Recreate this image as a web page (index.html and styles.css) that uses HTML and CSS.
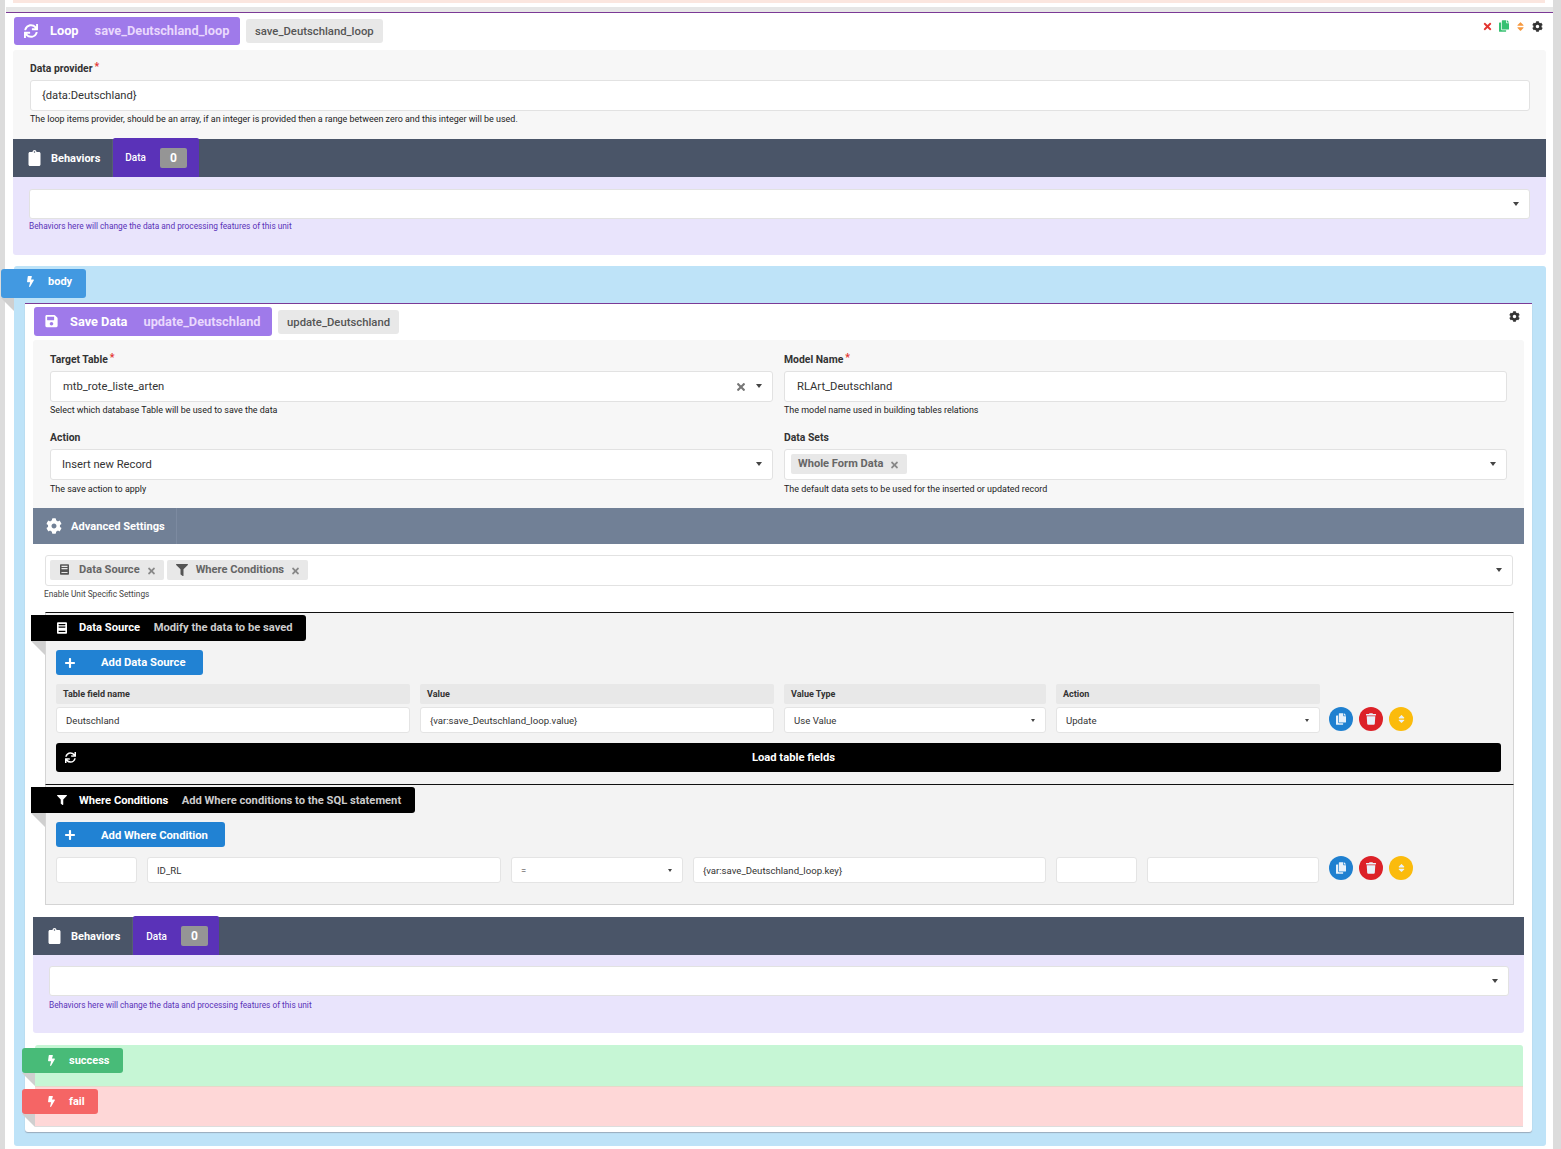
FILE: index.html
```html
<!DOCTYPE html>
<html lang="en">
<head>
<meta charset="utf-8">
<title>Loop editor</title>
<link rel="stylesheet" href="styles.css">
</head>
<body>
<svg class="defs" aria-hidden="true">
  <symbol id="i-sync" viewBox="0 0 512 512"><path d="M440.65 12.57l4 82.77A247.16 247.16 0 0 0 255.83 8C134.73 8 33.91 94.92 12.29 209.82A12 12 0 0 0 24.09 224h49.05a12 12 0 0 0 11.67-9.26 175.91 175.91 0 0 1 317-56.94l-101.46-4.86a12 12 0 0 0-12.57 12v47.41a12 12 0 0 0 12 12H500a12 12 0 0 0 12-12V12a12 12 0 0 0-12-12h-47.37a12 12 0 0 0-11.98 12.57zM255.83 432a175.61 175.61 0 0 1-146-77.8l101.8 4.87a12 12 0 0 0 12.57-12v-47.4a12 12 0 0 0-12-12H12a12 12 0 0 0-12 12V500a12 12 0 0 0 12 12h47.35a12 12 0 0 0 12-12.6l-4.15-82.57A247.17 247.17 0 0 0 255.83 504c121.11 0 221.93-86.92 243.55-201.82a12 12 0 0 0-11.8-14.18h-49.05a12 12 0 0 0-11.67 9.26A175.86 175.86 0 0 1 255.83 432z"/></symbol>
  <symbol id="i-cog" viewBox="0 0 512 512"><path d="M487.4 315.7l-42.6-24.6c4.3-23.2 4.3-47 0-70.2l42.6-24.6c4.9-2.8 7.1-8.6 5.5-14-11.1-35.6-30-67.8-54.7-94.6-3.8-4.1-10-5.1-14.8-2.3L380.8 110c-17.9-15.4-38.5-27.3-60.8-35.1V25.8c0-5.6-3.9-10.5-9.4-11.7-36.7-8.2-74.3-7.8-109.2 0-5.5 1.2-9.4 6.1-9.4 11.7V75c-22.2 7.9-42.8 19.8-60.8 35.1L88.7 85.5c-4.9-2.8-11-1.9-14.8 2.3-24.7 26.7-43.6 58.9-54.7 94.6-1.7 5.4.6 11.2 5.5 14L67.3 221c-4.3 23.2-4.3 47 0 70.2l-42.6 24.6c-4.9 2.8-7.1 8.6-5.5 14 11.1 35.6 30 67.8 54.7 94.6 3.8 4.1 10 5.1 14.8 2.3l42.6-24.6c17.9 15.4 38.5 27.3 60.8 35.1v49.2c0 5.6 3.9 10.5 9.4 11.7 36.7 8.2 74.3 7.8 109.2 0 5.5-1.2 9.4-6.1 9.4-11.7v-49.2c22.2-7.9 42.8-19.8 60.8-35.1l42.6 24.6c4.9 2.8 11 1.9 14.8-2.3 24.7-26.7 43.6-58.9 54.7-94.6 1.5-5.5-.7-11.3-5.6-14.1zM256 336c-44.1 0-80-35.9-80-80s35.9-80 80-80 80 35.9 80 80-35.9 80-80 80z"/></symbol>
  <symbol id="i-times" viewBox="0 0 352 512"><path d="M242.72 256l100.07-100.07c12.28-12.28 12.28-32.19 0-44.48l-22.24-22.24c-12.28-12.28-32.19-12.28-44.48 0L176 189.28 75.93 89.21c-12.28-12.28-32.19-12.28-44.48 0L9.21 111.45c-12.28 12.28-12.28 32.19 0 44.48L109.28 256 9.21 356.07c-12.28 12.28-12.28 32.19 0 44.48l22.24 22.24c12.28 12.28 32.2 12.28 44.48 0L176 322.72l100.07 100.07c12.28 12.28 32.2 12.28 44.48 0l22.24-22.24c12.28-12.28 12.28-32.19 0-44.48L242.72 256z"/></symbol>
  <symbol id="i-copy" viewBox="0 0 448 512"><path d="M320 448v40c0 13.255-10.745 24-24 24H24c-13.255 0-24-10.745-24-24V120c0-13.255 10.745-24 24-24h72v296c0 30.879 25.121 56 56 56h168zm0-344V0H152c-13.255 0-24 10.745-24 24v368c0 13.255 10.745 24 24 24h272c13.255 0 24-10.745 24-24V128H344c-13.2 0-24-10.8-24-24zm120.971-31.029L375.029 7.029A24 24 0 0 0 358.059 0H352v96h96v-6.059a24 24 0 0 0-7.029-16.97z"/></symbol>
  <symbol id="i-sort" viewBox="0 0 320 512"><path d="M41 288h238c21.4 0 32.1 25.9 17 41L177 448c-9.4 9.4-24.6 9.4-33.9 0L24 329c-15.1-15.1-4.4-41 17-41zm255-105L177 64c-9.4-9.4-24.6-9.4-33.9 0L24 183c-15.1 15.1-4.4 41 17 41h238c21.4 0 32.1-25.9 17-41z"/></symbol>
  <symbol id="i-trash" viewBox="0 0 448 512"><path d="M432 32H312l-9.4-18.7A24 24 0 0 0 281.1 0H166.8a23.72 23.72 0 0 0-21.4 13.3L136 32H16A16 16 0 0 0 0 48v32a16 16 0 0 0 16 16h416a16 16 0 0 0 16-16V48a16 16 0 0 0-16-16zM53.2 467a48 48 0 0 0 47.9 45h245.8a48 48 0 0 0 47.9-45L416 128H32z"/></symbol>
  <symbol id="i-save" viewBox="0 0 448 512"><path d="M433.941 129.941l-83.882-83.882A48 48 0 0 0 316.118 32H48C21.49 32 0 53.49 0 80v352c0 26.51 21.49 48 48 48h352c26.51 0 48-21.49 48-48V163.882a48 48 0 0 0-14.059-33.941zM224 416c-35.346 0-64-28.654-64-64 0-35.346 28.654-64 64-64s64 28.654 64 64c0 35.346-28.654 64-64 64zm96-304.52V212c0 6.627-5.373 12-12 12H76c-6.627 0-12-5.373-12-12V108c0-6.627 5.373-12 12-12h228.52c3.183 0 6.235 1.264 8.485 3.515l3.48 3.48A11.996 11.996 0 0 1 320 111.48z"/></symbol>
  <symbol id="i-filter" viewBox="0 0 512 512"><path d="M487.976 0H24.028C2.71 0-8.047 25.866 7.058 40.971L192 225.941V432c0 7.831 3.821 15.17 10.237 19.662l80 55.98C298.02 518.69 320 507.493 320 487.98V225.941l184.947-184.97C520.021 25.896 509.338 0 487.976 0z"/></symbol>
  <symbol id="i-clip" viewBox="0 0 384 512"><path d="M384 112v352c0 26.51-21.49 48-48 48H48c-26.51 0-48-21.49-48-48V112c0-26.51 21.49-48 48-48h80c0-35.29 28.71-64 64-64s64 28.71 64 64h80c26.51 0 48 21.49 48 48zM192 40c-13.255 0-24 10.745-24 24s10.745 24 24 24 24-10.745 24-24-10.745-24-24-24z"/></symbol>
  <symbol id="i-bolt" viewBox="0 0 320 512"><path d="M296 160H180.6l42.6-129.8C227.2 15 215.7 0 200 0H56C44 0 33.8 8.9 32.2 20.8l-32 240C-1.7 275.2 9.5 288 24 288h118.7L96.6 482.5c-3.6 15.2 8 29.5 23.3 29.5 8.4 0 16.4-4.4 20.8-12l176-304c9.3-15.9-2.2-36-20.7-36z"/></symbol>
  <symbol id="i-plus" viewBox="0 0 448 512"><path d="M416 208H272V64c0-17.67-14.33-32-32-32h-32c-17.67 0-32 14.33-32 32v144H32c-17.67 0-32 14.33-32 32v32c0 17.67 14.33 32 32 32h144v144c0 17.67 14.33 32 32 32h32c17.67 0 32-14.33 32-32V304h144c17.67 0 32-14.33 32-32v-32c0-17.67-14.33-32-32-32z"/></symbol>
  <symbol id="i-book" viewBox="0 0 448 512"><path d="M48 0h352c26.500 0 48 21.500 48 48v416c0 26.500-21.500 48-48 48H48c-26.500 0-48-21.500-48-48V48C0 21.500 21.500 0 48 0zm40 72c-8.800 0-16 7.200-16 16v24c0 8.800 7.200 16 16 16h272c8.800 0 16-7.200 16-16V88c0-8.800-7.200-16-16-16zm0 112c-8.800 0-16 7.200-16 16v24c0 8.800 7.200 16 16 16h272c8.800 0 16-7.200 16-16v-24c0-8.800-7.200-16-16-16zM72 384v36c0 8.800 7.200 16 16 16h272c8.800 0 16-7.200 16-16v-36z"/></symbol>
</svg>

<div class="page">
  <div class="prev-card"><div class="prev-strip"></div></div>

  <section class="unit unit-loop">
    <div class="unit-head">
      <div class="title-tag title-loop"><svg class="ico ico-title"><use href="#i-sync"/></svg><b>Loop</b><span>save_Deutschland_loop</span></div>
      <div class="name-tag">save_Deutschland_loop</div>
      <div class="unit-tools">
        <svg class="ico tool tool-del"><use href="#i-times"/></svg>
        <svg class="ico tool tool-copy"><use href="#i-copy"/></svg>
        <svg class="ico tool tool-sort"><use href="#i-sort"/></svg>
        <svg class="ico tool tool-cog"><use href="#i-cog"/></svg>
      </div>
    </div>
    <div class="panel panel-provider">
      <label class="lbl">Data provider<em>*</em></label>
      <div class="field field-tight">{data:Deutschland}</div>
      <div class="help">The loop items provider, should be an array, if an integer is provided then a range between zero and this integer will be used.</div>
    </div>
    <div class="bar bar-dark bar-outer">
      <div class="bar-item"><svg class="ico ico-bar"><use href="#i-clip"/></svg>Behaviors</div>
      <div class="bar-tab">Data<span class="count">0</span></div>
    </div>
    <div class="lav">
      <div class="field field-select"><i class="caret"></i></div>
      <div class="help help-purple">Behaviors here will change the data and processing features of this unit</div>
    </div>

    <div class="segment seg-body">
      <div class="event-tag tag-body"><svg class="ico ico-bolt"><use href="#i-bolt"/></svg>body</div>

      <section class="unit unit-save">
        <div class="unit-head unit-head-save">
          <div class="title-tag title-save"><svg class="ico ico-title ico-save"><use href="#i-save"/></svg><b>Save Data</b><span>update_Deutschland</span></div>
          <div class="name-tag">update_Deutschland</div>
          <div class="unit-tools"><svg class="ico tool tool-cog"><use href="#i-cog"/></svg></div>
        </div>

        <div class="panel panel-form">
          <div class="form-cell">
            <label class="lbl">Target Table<em>*</em></label>
            <div class="field field-select">mtb_rote_liste_arten<svg class="ico clear"><use href="#i-times"/></svg><i class="caret"></i></div>
            <div class="help help-form">Select which database Table will be used to save the data</div>
          </div>
          <div class="form-cell">
            <label class="lbl">Model Name<em>*</em></label>
            <div class="field">RLArt_Deutschland</div>
            <div class="help help-form">The model name used in building tables relations</div>
          </div>
          <div class="form-cell">
            <label class="lbl">Action</label>
            <div class="field field-select field-tight">Insert new Record<i class="caret"></i></div>
            <div class="help help-form help-low">The save action to apply</div>
          </div>
          <div class="form-cell">
            <label class="lbl">Data Sets</label>
            <div class="field field-select field-chips field-sets"><span class="chip">Whole Form Data<svg class="ico chip-x"><use href="#i-times"/></svg></span><i class="caret"></i></div>
            <div class="help help-form help-low">The default data sets to be used for the inserted or updated record</div>
          </div>
        </div>

        <div class="bar bar-slate">
          <div class="bar-item bar-item-adv"><svg class="ico ico-adv"><use href="#i-cog"/></svg>Advanced Settings</div>
        </div>

        <div class="settings">
          <div class="field field-select field-chips field-multi">
            <span class="chip"><svg class="ico chip-ico"><use href="#i-book"/></svg>Data Source<svg class="ico chip-x"><use href="#i-times"/></svg></span>
            <span class="chip"><svg class="ico chip-ico chip-ico-filter"><use href="#i-filter"/></svg>Where Conditions<svg class="ico chip-x"><use href="#i-times"/></svg></span>
            <i class="caret"></i>
          </div>
          <div class="help help-small">Enable Unit Specific Settings</div>

          <div class="group group-first">
            <div class="group-tag"><svg class="ico ico-group"><use href="#i-book"/></svg><b>Data Source</b><span>Modify the data to be saved</span></div>
            <button class="add-btn"><span class="add-ico"><svg class="ico ico-plus"><use href="#i-plus"/></svg></span>Add Data Source</button>
            <div class="grid-ds">
              <div class="th">Table field name</div>
              <div class="th">Value</div>
              <div class="th">Value Type</div>
              <div class="th">Action</div>
              <div></div>
              <div class="cell">Deutschland</div>
              <div class="cell">{var:save_Deutschland_loop.value}</div>
              <div class="cell cell-select">Use Value<i class="caret caret-s"></i></div>
              <div class="cell cell-select">Update<i class="caret caret-s"></i></div>
              <div class="ops">
                <span class="op op-blue"><svg class="ico"><use href="#i-copy"/></svg></span>
                <span class="op op-red"><svg class="ico"><use href="#i-trash"/></svg></span>
                <span class="op op-yellow"><svg class="ico"><use href="#i-sort"/></svg></span>
              </div>
            </div>
            <div class="load-bar"><svg class="ico ico-load"><use href="#i-sync"/></svg>Load table fields</div>
          </div>

          <div class="group group-second">
            <div class="group-tag"><svg class="ico ico-group"><use href="#i-filter"/></svg><b>Where Conditions</b><span>Add Where conditions to the SQL statement</span></div>
            <button class="add-btn"><span class="add-ico"><svg class="ico ico-plus"><use href="#i-plus"/></svg></span>Add Where Condition</button>
            <div class="grid-wc">
              <div class="cell"></div>
              <div class="cell">ID_RL</div>
              <div class="cell cell-select">=<i class="caret caret-s"></i></div>
              <div class="cell">{var:save_Deutschland_loop.key}</div>
              <div class="cell"></div>
              <div class="cell"></div>
              <div class="ops">
                <span class="op op-blue"><svg class="ico"><use href="#i-copy"/></svg></span>
                <span class="op op-red"><svg class="ico"><use href="#i-trash"/></svg></span>
                <span class="op op-yellow"><svg class="ico"><use href="#i-sort"/></svg></span>
              </div>
            </div>
          </div>
        </div>

        <div class="bar bar-dark bar-inner">
          <div class="bar-item"><svg class="ico ico-bar"><use href="#i-clip"/></svg>Behaviors</div>
          <div class="bar-tab">Data<span class="count">0</span></div>
        </div>
        <div class="lav lav-inner">
          <div class="field field-select"><i class="caret"></i></div>
          <div class="help help-purple">Behaviors here will change the data and processing features of this unit</div>
        </div>

        <div class="segment seg-success">
          <div class="event-tag tag-success"><svg class="ico ico-bolt"><use href="#i-bolt"/></svg>success</div>
        </div>
        <div class="segment seg-fail">
          <div class="event-tag tag-fail"><svg class="ico ico-bolt"><use href="#i-bolt"/></svg>fail</div>
        </div>
      </section>
    </div>
  </section>
</div>
</body>
</html>
```

FILE: styles.css
```css
* { box-sizing: border-box; }
html, body { margin: 0; height: 100%; }
body {
  background: #dcdcdc;
  font-family: Roboto, "Liberation Sans", sans-serif;
  font-size: 11px;
  color: #222;
  overflow: hidden;
}
.defs { display: none; }
.ico { display: block; fill: currentColor; flex: none; }
.page { margin-left: 5px; width: 1548px; height: 1149px; background: #fff; }

.prev-card { height: 7px; background: #fff; padding: 0 8px; }
.prev-strip { height: 3px; background: #fbe6df; }

.unit { background: #fff; border-top: 1px solid #7b3a96; }
.unit-loop { margin: 5px 0 0 1px; padding: 0 7px; box-shadow: 0 -5px 0 #e6e6e6; height: 1137px; }
.unit-head { display: flex; align-items: center; height: 37px; padding: 4px 0 5px 1px; }
.title-tag {
  display: flex; align-items: center; height: 28px; border-radius: 3px; white-space: nowrap;
  background: #9f7aea; color: #fff; font-size: 12.8px; padding: 0 10px 1px;
}
.title-tag b { font-weight: 700; margin-left: 12px; }
.title-tag span { font-weight: 700; margin-left: 16px; color: #e9d8fd; }
.ico-title { width: 14px; height: 14px; }
.ico-save { width: 13px; height: 14px; margin-left: 1px; }
.title-loop { width: 226px; }
.title-save { width: 238px; height: 29px; }
.title-save b { margin-left: 12px; }
.name-tag {
  height: 24px; line-height: 25px; padding: 0 9px; margin-left: 6px; border-radius: 3px;
  background: #e8e8e8; color: #555; font-size: 11.3px; font-weight: 500; white-space: nowrap;
}
.unit-tools { display: flex; align-items: center; margin-left: auto; align-self: flex-start; padding-top: 3px; }
.tool { height: 11px; width: 11px; margin-left: 6px; }
.tool-del { color: #e3342f; width: 9px; margin-right: 1px; }
.tool-copy { color: #38c172; width: 10px; height: 12px; }
.tool-sort { color: #f6993f; width: 7px; margin-left: 8px; }
.tool-cog { color: #333; margin-left: 8px; margin-right: 3px; }

.panel { background: #f7f7f7; border-radius: 3px 3px 0 0; }
.panel-provider { height: 89px; padding: 12px 16px 0 17px; }
.lbl { display: block; height: 13px; line-height: 13px; font-size: 10.4px; font-weight: 700; color: #333; margin-bottom: 5px; }
.lbl em { color: #e3342f; font-style: normal; margin-left: 2px; position: relative; top: -2px; }
.field {
  display: flex; align-items: center; height: 31px; padding: 0 10px 1px 12px;
  background: #fff; border: 1px solid #e2e2e2; border-radius: 3px; font-size: 11.2px; color: #333;
}
.field-tight { padding-left: 11px; }
.help { font-size: 8.95px; line-height: 16px; color: #222; height: 16px; white-space: nowrap; }
.help-low { padding-top: 1px; }

.bar { display: flex; align-items: stretch; color: #fff; }
.bar-dark { background: #4a5568; height: 38px; }
.bar-item { display: flex; align-items: center; font-size: 11px; font-weight: 700; padding: 0 12px 0 15px; border-right: 1px solid #556072; }
.ico-bar { width: 13px; height: 16px; margin-right: 10px; }
.bar-tab {
  display: flex; align-items: center; width: 86px; padding-left: 12px; margin-top: -1px;
  background: #5a32b8; font-size: 10px; font-weight: 500; border-radius: 2px 2px 0 0;
}
.count {
  display: block; width: 27px; height: 20px; line-height: 20px; margin-left: 14px; text-align: center;
  border-radius: 2px; background: #959595; font-size: 12px; font-weight: 700;
}
.lav { background: #e9e4fc; height: 78px; padding: 12px 16px; border-radius: 0 0 3px 3px; }
.lav .field { height: 30px; }
.field-select .caret { margin-left: auto; }
.caret { display: block; flex: none; width: 0; height: 0; border: 3.5px solid transparent; border-top: 4px solid #444; border-bottom: 0; }
.caret-s { border-width: 2.5px; border-top-width: 3px; border-bottom: 0; }
.help-purple { color: #5a32b8; font-size: 8.3px; line-height: 14px; }

.segment { position: relative; }
.seg-body {
  margin: 11px 0 0 1px; height: 880px; padding: 3px 14px 0 11px;
  background: #bee3f8; border-radius: 3px;
}
.event-tag {
  position: relative; display: flex; align-items: center; color: #fff;
  font-weight: 700; font-size: 11px; z-index: 2;
}
.event-tag::after {
  content: ""; position: absolute; left: 0; top: 100%; width: 0; height: 0;
  border-top: 13px solid #cfcfcf; border-left: 13px solid transparent;
}
.tag-body { width: 85px; height: 29px; margin-left: -24px; background: #4299e1; padding: 0 0 5px 26px; border-radius: 3px; }
.ico-bolt { width: 7px; height: 11px; margin-right: 14px; }

.unit-save { margin-top: 5px; height: 829px; padding: 0 8px; border-radius: 0 0 3px 3px; box-shadow: 0 1px 1px #9ab; }
.unit-head-save { height: 36px; padding: 3px 0 4px 1px; }
.unit-head-save .unit-tools { padding-top: 4px; }
.unit-head-save .tool-cog { margin-right: 4px; }

.panel-form {
  height: 168px; padding: 13px 17px 0; display: grid;
  grid-template-columns: 723px 723px; column-gap: 11px; row-gap: 13px; align-content: start;
}
.clear { width: 8px; height: 12px; color: #777; margin-left: auto; margin-right: 11px; position: relative; top: 1px; }
.clear + .caret { margin-left: 0; }
.field-chips { padding: 0 10px 2px 4px; gap: 3px; }
.field-sets { padding-left: 6px; }
.chip {
  display: inline-flex; align-items: center; height: 20px; padding: 0 9px 0 7px; background: #e8e8e8;
  border-radius: 2px; color: #666; font-size: 11.1px; font-weight: 700;
}
.chip-x { width: 7px; height: 10px; margin-left: 8px; color: #888; position: relative; top: 1px; }
.chip-ico { width: 9px; height: 11px; margin: 0 10px 0 3px; color: #555; }
.chip-ico-filter { width: 12px; height: 12px; margin: 0 8px 0 2px; }

.bar-slate { background: #718096; height: 36px; }
.bar-item-adv { padding: 0 11px 0 13px; border-right: 1px solid #7c8aa0; font-size: 11.1px; }
.ico-adv { width: 16px; height: 16px; margin-right: 9px; }

.settings { padding: 11px 10px 0 12px; height: 373px; }
.field-multi { height: 31px; margin-right: 1px; }
.help-small { font-size: 8.3px; color: #444; line-height: 17px; height: 17px; margin: 0 0 9px -1px; }

.group { background: #f3f3f3; border: solid #d4d4d4; border-width: 1px 1px 0; border-top-color: #111; padding-left: 10px; }
.group-first { height: 172px; padding-top: 2px; }
.group-second { height: 121px; padding-top: 2px; border-bottom-width: 1px; }
.group-tag {
  position: relative; display: flex; align-items: center; width: fit-content; height: 26px;
  margin-left: -25px; padding: 0 13.5px 1px 26px; background: #000; border-radius: 0 3px 3px 0; color: #fff; font-size: 11.2px; white-space: nowrap;
}
.group-second .group-tag { padding-bottom: 0; }
.group-tag b { font-weight: 700; }
.group-tag span { font-weight: 700; margin-left: 13.5px; color: #ccc; }
.group-tag::after {
  content: ""; position: absolute; left: 0; top: 100%; width: 0; height: 0;
  border-top: 14px solid #cfcfcf; border-left: 14px solid transparent;
}
.ico-group { width: 10px; height: 12px; margin-right: 12px; }
.add-btn {
  display: flex; align-items: center; height: 25px; margin-top: 9px; padding: 0 17px 0 0; border: 0; border-radius: 3px;
  background: #2182d3; color: #fff; font: 700 11.25px Roboto, "Liberation Sans", sans-serif;
}
.group-second .add-btn { padding-top: 1px; }
.add-ico { width: 28px; display: flex; justify-content: center; margin-right: 17px; }
.ico-plus { width: 10px; height: 12px; }

.grid-ds { display: grid; grid-template-columns: 354px 354px 262px 264px auto; column-gap: 10px; row-gap: 3px; margin-top: 9px; }
.th { height: 20px; line-height: 20px; padding-left: 7px; background: #e8e8e8; font-size: 9px; font-weight: 700; color: #333; border-radius: 2px; }
.cell {
  display: flex; align-items: center; height: 26px; padding: 0 10px 0 9px; background: #fff;
  border: 1px solid #e4e4e4; border-radius: 3px; font-size: 9.6px; color: #333;
}
.cell-select .caret { margin-left: auto; }
.grid-wc { display: grid; grid-template-columns: 81px 354px 172px 353px 81px 172px auto; column-gap: 10px; margin-top: 10px; }
.ops { display: flex; align-items: flex-start; gap: 6px; margin-left: -1px; }
.grid-wc .ops { margin-left: 0; margin-top: -1px; }
.op { display: flex; align-items: center; justify-content: center; width: 24px; height: 24px; border-radius: 50%; color: #fff; }
.op .ico { width: 10px; height: 12px; fill: #e8f1fa; }
.op-blue { background: #1f80d0; }
.op-red { background: #dc2128; }
.op-yellow { background: #fbbb0c; }
.op-yellow .ico { width: 7px; height: 10px; }
.load-bar {
  position: relative; display: flex; align-items: center; justify-content: center; height: 29px; margin: 10px 12px 0 0; padding-left: 30px;
  background: #000; color: #fff; border-radius: 3px; font-size: 11.2px; font-weight: 700;
}
.ico-load { position: absolute; left: 9px; top: 9px; width: 11px; height: 11px; }

.bar-inner .bar-tab { padding: 1px 0 0 13px; }
.bar-inner .bar-item { padding-left: 15px; }
.lav-inner { padding: 11px 15px 0 16px; }
.lav-inner .help-purple { margin-top: 2px; }

.seg-success { margin: 12px 1px 0 2px; height: 41px; background: #c6f6d5; padding-top: 3px; border-radius: 3px 3px 0 0; }
.seg-fail { margin: 0 1px 0 2px; height: 41px; background: #fed7d7; padding-top: 3px; border-top: 1px solid #e6d8c8; border-bottom: 1px solid #ddd; }
.tag-success, .tag-fail { height: 25px; margin-left: -13px; padding-left: 26px; border-radius: 3px; }
.tag-success { width: 101px; background: #48bb78; }
.tag-fail { width: 76px; background: #f56565; margin-top: -1px; }
```
